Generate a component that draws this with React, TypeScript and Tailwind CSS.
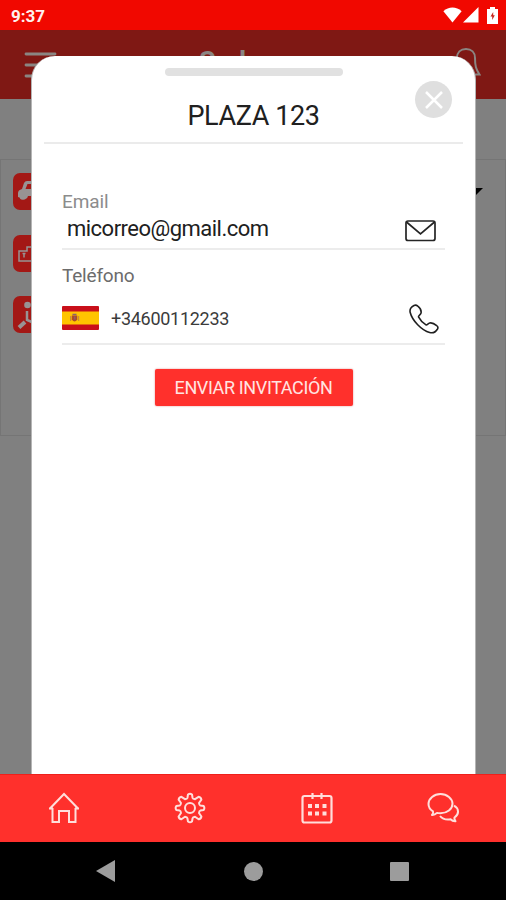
import React from 'react';

const StatusBar = () => (
  <div className="flex h-[30px] shrink-0 items-center justify-between bg-[#f10800] pl-[11px] pr-[8px] text-white">
    <span className="pt-[1px] text-[17px] font-bold leading-[30px] text-[#fff0ee]">9:37</span>
    <div className="flex items-center">
      <svg width="19" height="16" viewBox="0 0 19 16" fill="currentColor">
        <path d="M9.5 15.5 0.4 4.2C5.6-.6 13.4-.6 18.6 4.2Z" />
      </svg>
      <svg className="ml-[1px]" width="16" height="16" viewBox="0 0 16 16" fill="currentColor">
        <path d="M15.5 0v15.5H0Z" />
      </svg>
      <svg className="ml-[8px]" width="11" height="17" viewBox="0 0 11 17">
        <path d="M3 0h5v2h3v15H0V2h3Z" fill="currentColor" />
        <path d="M6.2 5 3.5 9.500h1.700v3.500l2.600-4.700H6.200Z" fill="#c5251c" />
      </svg>
    </div>
  </div>
);

const Header = () => (
  <header className="flex h-[69px] shrink-0 items-start bg-[#7f1814] text-[#8b8582]">
    <svg className="ml-[23px] mt-[21px]" width="34" height="29" viewBox="0 0 34 29" stroke="currentColor" strokeWidth="2.800" strokeLinecap="round">
      <path d="M3 3h29M3 14h29M3 25h29" />
    </svg>
    <h1 className="ml-[142px] mt-[16px] w-[130px] text-[27px] font-bold leading-[32px] tracking-[4.500px]">Salva</h1>
    <svg className="ml-auto mr-[25px] mt-[16px]" width="30" height="32" viewBox="0 0 30 32" fill="none" stroke="currentColor" strokeWidth="2">
      <path d="M15 3c-5.500 0-9 3.500-9 9 0 8-1 11-4.500 16.500h27C25 23 24 20 24 12c0-5.500-3.500-9-9-9Z" />
    </svg>
  </header>
);

interface TileProps {
  children: React.ReactNode;
}

const Tile: React.FC<TileProps> = ({ children }) => (
  <div className="h-[37px] w-[37px] rounded-[7px] bg-[#a31815]">
    <svg width="37" height="37" viewBox="0 0 37 37" fill="none" stroke="#989393" strokeWidth="1.500">
      {children}
    </svg>
  </div>
);

const Page = () => (
  <main className="flex flex-1 flex-col bg-[#808080]">
    <div className="h-[60px]" />
    <section className="flex h-[277px] items-start justify-between border border-[#757575] pl-[12px] pr-[22px] pt-[13px]">
      <div className="flex flex-col gap-[24.500px]">
        <Tile>
          <path fill="#989393" stroke="none" fillRule="evenodd" d="M5 24v-4q0-3 4-4l2-6q1-2 3-2h12l4 8v10h-5v-3H15a4 4 0 0 1-7 2ZM12.500 16h6.500v-5h-4.500Z" />
          <circle cx="9.500" cy="24" r="2.800" fill="#989393" stroke="none" />
        </Tile>
        <Tile>
          <path d="M6 26V16h8v-4h5l3 4h8v10Z" />
          <path d="M9.500 18.500h3M11 18.500v4" />
        </Tile>
        <Tile>
          <circle cx="14.500" cy="9" r="3.300" fill="#989393" stroke="none" />
          <path d="M14 15v9l7 3" strokeWidth="2.500" />
          <path d="m6 31.500 6-5.500" strokeWidth="4" />
        </Tile>
      </div>
      <svg className="mt-[15px]" width="16" height="8" viewBox="0 0 16 8">
        <path d="M0 0h16L8 8Z" fill="#000" />
      </svg>
    </section>
  </main>
);

const SpainFlag = () => (
  <svg width="37" height="24" viewBox="0 0 37 24">
    <rect width="37" height="24" rx="1" fill="#c9101a" />
    <rect y="5.500" width="37" height="13" fill="#ffc400" />
    <rect x="8" y="10" width="1.200" height="5" fill="#c98b3b" />
    <rect x="16" y="10" width="1.200" height="5" fill="#c98b3b" />
    <path d="M9.800 9.500h5.500v4q-2.700 4-5.500 0Z" fill="#ad4b28" />
    <path d="M10.500 8.500h4M12.800 10.500v3" stroke="#8b6070" strokeWidth="1.500" />
  </svg>
);

const InviteModal = () => (
  <div className="absolute left-[31px] top-[56px] flex h-[718px] w-[445px] flex-col rounded-t-[24px] border-x border-[#b5b5b5] bg-white text-[#202020]">
    <div className="mx-auto mt-[12px] h-[8px] w-[178px] shrink-0 rounded-full bg-[#e1e1e1]" />
    <div className="mx-[12px] flex h-[68px] shrink-0 items-start justify-center border-b-2 border-[#ebebeb] pt-[23px]">
      <h2 className="text-[27px] leading-[34px] tracking-[-0.400px]">PLAZA 123</h2>
    </div>
    <button className="absolute right-[23px] top-[25px] flex h-[37px] w-[37px] items-center justify-center rounded-full bg-[#dfdfdf]" aria-label="Cerrar">
      <svg width="18" height="18" viewBox="0 0 18 18" stroke="#fff" strokeWidth="2.500">
        <path d="m1 1 16 16M17 1 1 17" />
      </svg>
    </button>

    <form className="mx-[30px] mt-[45px] flex flex-col">
      <label className="h-[24px] pt-[1px] text-[19px] leading-[24px] tracking-[-0.100px] text-[#8c8c8c]">Email</label>
      <div className="flex h-[37px] items-start justify-between border-b-2 border-[#ececec] pl-[5px] pr-[9px]">
        <span className="mt-[2px] text-[22px] leading-[28px] tracking-[-0.520px]">micorreo@gmail.com</span>
        <svg className="mt-[7px]" width="31" height="22" viewBox="0 0 31 22" fill="none" stroke="#252525" strokeWidth="1.700">
          <rect x="1" y="1" width="29" height="19.500" rx="2" />
          <path d="m1.500 2 14 12L29.500 2" />
        </svg>
      </div>
      <label className="mt-[13px] h-[26px] text-[19px] leading-[26px] tracking-[-0.200px] text-[#6c6c6c]">Teléfono</label>
      <div className="flex h-[56px] items-start border-b-2 border-[#ececec] pr-[6px]">
        <div className="mt-[17px]"><SpainFlag /></div>
        <span className="ml-[12px] mt-[18px] text-[18px] leading-[24px] tracking-[-0.280px] text-[#3b3b3b]">+34600112233</span>
        <svg className="ml-auto mt-[15px]" width="30" height="30" viewBox="0 0 30 30" fill="none" stroke="#202020" strokeWidth="1.600" strokeLinejoin="round">
          <path d="M5 1.500C2 3 .5 5.500 1.200 8.500c2 8 11.500 18 19.500 20 3 .8 6-.5 7.800-3.500.7-1.300.4-2.500-.8-3.300-2.200-1.900-5-3.200-7-2.700-1.800.5-2.300 2.200-3.700 1.900-2.500-1.600-6-5-7.500-8-.3-1.600 2.700-2 2.700-4.600 0-2-1.500-4.700-3.400-6.100-1.100-1-2.600-1.300-3.800-.7Z" />
        </svg>
      </div>
      <button type="button" className="mx-auto mt-[24px] h-[37px] w-[198px] rounded-[2px] bg-[#ff302c] text-[18px] tracking-[-0.370px] text-[#ffe5e2] shadow-[0_0_2px_#dd8888]">
        ENVIAR INVITACIÓN
      </button>
    </form>
  </div>
);

const TabBar = () => (
  <nav className="grid h-[68px] shrink-0 grid-cols-4 place-items-center border-t border-[#ee201b] bg-[#ff302c] pb-[1px] pl-[1px] text-[#ffdedb]">
    <svg width="32" height="32" viewBox="0 0 32 32" fill="none" stroke="currentColor" strokeWidth="2">
      <path d="M4.500 16v14h6.500V19h10v11h6.500V16M1.500 17 16 2l14.500 15M1 16.500h4M27 16.500h4" />
    </svg>
    <svg width="32" height="32" viewBox="0 0 32 32" fill="none" stroke="currentColor" strokeWidth="2" strokeLinejoin="round">
      <path d="M14 2.500q2-1.500 4 0l.6 3.500q.3 1 2.400 1.200l3.600-2.400q2.400.4 2.800 2.800L25 11q.2 2.100 1.300 2.500l3.400.5q1.300 2 0 4l-3.400.6q-1.100.4-1.300 2.400l2.400 3.500q-.4 2.400-2.800 2.800L21 24.800q-2.100.2-2.400 1.400L18 29.500q-2 1.500-4 0l-.6-3.300q-.3-1.200-2.400-1.400l-3.600 2.500q-2.400-.4-2.800-2.800L7 21q-.2-2-1.300-2.400L2.300 18q-1.300-2 0-4l3.400-.5Q6.800 13.100 7 11L4.600 7.600q.4-2.400 2.800-2.800L11 7.200q2.100-.2 2.400-1.200Z" />
      <circle cx="16" cy="16" r="5" />
    </svg>
    <svg width="32" height="32" viewBox="0 0 32 32" fill="none" stroke="currentColor" strokeWidth="2.200">
      <rect x="1.500" y="4" width="29" height="26.500" rx="2" />
      <path d="M11.500 1v6M20.500 1v6" />
      <path d="M7 14h4M14 14h4M21.500 14h4M7 21.500h4M14 21.500h4M21.500 21.500h4" strokeWidth="4" />
    </svg>
    <svg width="32" height="32" viewBox="0 0 32 32" fill="none" stroke="currentColor" strokeWidth="2" strokeLinejoin="round">
      <path d="M5 23c1.300-1.500 1.500-2.500 1-3.700C3 17.500 1.500 15 1.500 12 1.500 6.500 7 2 13.500 2s12 4.500 12 9.800-5.500 9.500-12 9.500c-1.300 0-2.500-.1-3.500-.4-1.500 1.500-3 2.300-5 2.100Z" />
      <path d="M13 24c2 2.500 6 4 10.500 3.300 1.500 1.500 3 2 5 1.900-1-1.500-1.300-2.500-1-3.700 5-3.500 4.500-9-.5-11.800" />
    </svg>
  </nav>
);

const SystemNav = () => (
  <div className="flex h-[58px] shrink-0 items-center bg-black pl-[96px] text-[#9c9c9c]">
    <svg width="19" height="22" viewBox="0 0 19 22" fill="currentColor">
      <path d="M19 0v22L0 11Z" />
    </svg>
    <div className="ml-[129px] h-[19px] w-[19px] rounded-full bg-[#9c9c9c]" />
    <div className="ml-[127px] h-[19px] w-[19px] rounded-[1px] bg-[#9c9c9c]" />
  </div>
);

const App: React.FC = () => (
  <div className="relative flex h-[900px] w-[506px] flex-col overflow-hidden bg-black font-[Roboto,sans-serif]">
    <StatusBar />
    <Header />
    <Page />
    <TabBar />
    <SystemNav />
    <InviteModal />
  </div>
);

export default App;
